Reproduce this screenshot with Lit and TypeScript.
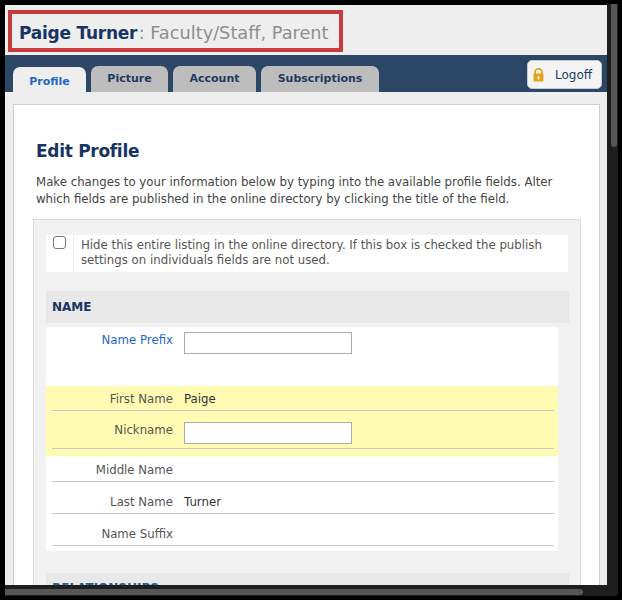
import { LitElement, html, css } from "lit";
import { customElement } from "lit/decorators.js";

@customElement("app-root")
export class AppRoot extends LitElement {
  static styles = css`
    :host { display: block; width: 622px; height: 600px; background: #000; font-family: "DejaVu Sans", Verdana, sans-serif; overflow: hidden; }
    .frame { display: grid; grid-template-columns: 5px 602px 15px; grid-template-rows: 5px 580px 15px; width: 622px; height: 600px; }
    .win { grid-column: 2; grid-row: 2; background: #eeeeee; overflow: hidden; display: flex; flex-direction: column; }
    .vbar { grid-column: 3; grid-row: 1 / 3; background: #1e1e1e; margin: 4px 4px 0 0; padding: 0 1px 0 4px; }
    .vthumb { height: 143px; background: #565656; border-radius: 0 0 3px 3px; }
    .hbar { grid-column: 1 / 4; grid-row: 3; background: #1e1e1e; margin: 0 4px 4px 5px; padding: 4px 0 1px; display: flex; border-radius: 0 0 4px 0; }
    .hthumb { width: 578px; height: 6px; background: #565656; border-radius: 0 3px 3px 0; }
    .head { height: 50px; flex: none; box-sizing: border-box; padding: 5px 0 0 3px; }
    .redbox { box-sizing: border-box; width: 335px; height: 42px; border: 4px solid #c63c3c; padding: 3px 0 0 7px; display: flex; align-items: center; font-size: 17.75px; white-space: nowrap; color: #8f8f8f; }
    .redbox b { color: #183463; font-weight: 700; font-size: 17px; letter-spacing: -0.25px; margin-right: 1.5px; }
    .nav { height: 37px; flex: none; background: #2c4665; display: flex; align-items: flex-end; padding: 0 5px 0 8px; box-sizing: border-box; }
    .tab { box-sizing: border-box; height: 26px; background: #bdbdbd; color: #1f3b63; font-size: 11px; font-weight: 700; border-radius: 7px 7px 0 0; display: flex; align-items: center; justify-content: center; margin-right: 5px; padding-bottom: 1px; }
    .tab.on { background: #eeeeee; color: #2467c9; height: 25px; padding: 3px 0 0; margin-right: 5px; }
    .t1 { width: 73px; } .t2 { width: 77px; } .t3 { width: 83px; } .t4 { width: 118px; }
    .logoff { box-sizing: border-box; margin: 0 0 3px auto; width: 75px; height: 29px; background: #f4f4f4; border: 1px solid #c4c8cf; border-radius: 5px; display: flex; align-items: center; gap: 11px; padding-left: 5px; font-size: 12px; color: #1f3b63; }
    .body { padding: 12px 7px 0 8px; flex: none; }
    .panel { background: #fff; border: 1px solid #cfcfcf; padding: 35px 19px 0 22px; box-sizing: border-box; height: 500px; overflow: hidden; }
    h1 { margin: 0; font-size: 17px; letter-spacing: -0.3px; line-height: 22px; color: #183463; font-weight: 700; }
    .intro { margin: 12px 0 0; font-size: 11.75px; line-height: 17px; color: #444; }
    .form { margin: 11px 0 0 -3px; background: #f2f2f2; border: 1px solid #dcdcdc; padding: 15px 11px 0 12px; width: 548px; box-sizing: border-box; }
    .hide { background: #fff; display: flex; height: 37px; margin-right: 1px; }
    .cbcell { width: 27px; flex: none; border-right: 1px solid #ececec; display: flex; justify-content: center; }
    .cb { width: 13px; height: 13px; border: 1px solid #777; border-radius: 3px; margin-top: 1px; background: #fff; box-sizing: border-box; }
    .hidetxt { font-size: 11.75px; line-height: 15px; color: #555; padding: 3px 0 0 7px; }
    .sect { margin-top: 19px; height: 32px; background: #e8e8e8; font-size: 12px; font-weight: 700; color: #183463; padding-left: 6px; display: flex; align-items: center; }
    .rows { margin-top: 4px; width: 512px; background: #fff; padding-bottom: 5px; }
    .row { display: flex; margin: 0 4px 0 6px; box-sizing: border-box; font-size: 11.75px; }
    .lab { width: 121px; flex: none; text-align: right; color: #555; padding-top: 1px; }
    .lab.link { color: #2467c9; }
    .val { margin-left: 11px; color: #333; padding-top: 1px; }
    .line { border-bottom: 1px solid #c9c9c9; }
    .r1 { height: 59px; padding-top: 5px; }
    .r2 { height: 25px; padding-top: 5px; }
    .r3 { height: 38px; padding-top: 11px; }
    .r4 { height: 26px; padding-top: 6px; }
    .r5 { height: 32px; padding-top: 12px; }
    .yellow { background: #fffbb3; padding-bottom: 7px; }
    input { box-sizing: border-box; width: 168px; height: 22px; border: 1px solid #aaa; margin: 0 0 0 11px; padding: 0; background: #fff; border-radius: 0; }
    .sect2 { margin-top: 22px; color: #2c5a92; padding-bottom: 3px; box-sizing: border-box; }
  `;

  render() {
    return html`
      <div class="frame">
        <div class="vbar"><div class="vthumb"></div></div>
        <div class="win">
          <div class="head">
            <div class="redbox"><b>Paige Turner</b>: Faculty/Staff, Parent</div>
          </div>
          <div class="nav">
            <div class="tab on t1">Profile</div>
            <div class="tab t2">Picture</div>
            <div class="tab t3">Account</div>
            <div class="tab t4">Subscriptions</div>
            <div class="logoff">
              <svg width="11" height="14" viewBox="0 0 11 14"><path d="M2.2 6V4a3.3 3.3 0 0 1 6.6 0v2" fill="none" stroke="#e3a31c" stroke-width="1.8"/><rect x="0.5" y="5.5" width="10" height="8" rx="1" fill="#e3a31c"/><rect x="4.6" y="8" width="1.8" height="3.5" fill="#fbeec4"/></svg>
              <span>Logoff</span>
            </div>
          </div>
          <div class="body">
            <div class="panel">
              <h1>Edit Profile</h1>
              <p class="intro">Make changes to your information below by typing into the available profile fields. Alter which fields are published in the online directory by clicking the title of the field.</p>
              <div class="form">
                <div class="hide">
                  <div class="cbcell"><div class="cb"></div></div>
                  <div class="hidetxt">Hide this entire listing in the online directory. If this box is checked the publish settings on individuals fields are not used.</div>
                </div>
                <div class="sect">NAME</div>
                <div class="rows">
                  <div class="row r1"><div class="lab link">Name Prefix</div><input /></div>
                  <div class="yellow">
                    <div class="row line r2"><div class="lab">First Name</div><div class="val">Paige</div></div>
                    <div class="row line r3"><div class="lab">Nickname</div><input /></div>
                  </div>
                  <div class="row line r4"><div class="lab">Middle Name</div></div>
                  <div class="row line r5"><div class="lab">Last Name</div><div class="val">Turner</div></div>
                  <div class="row line r5"><div class="lab">Name Suffix</div></div>
                </div>
                <div class="sect sect2">RELATIONSHIPS</div>
              </div>
            </div>
          </div>
        </div>
        <div class="hbar"><div class="hthumb"></div></div>
      </div>
    `;
  }
}
